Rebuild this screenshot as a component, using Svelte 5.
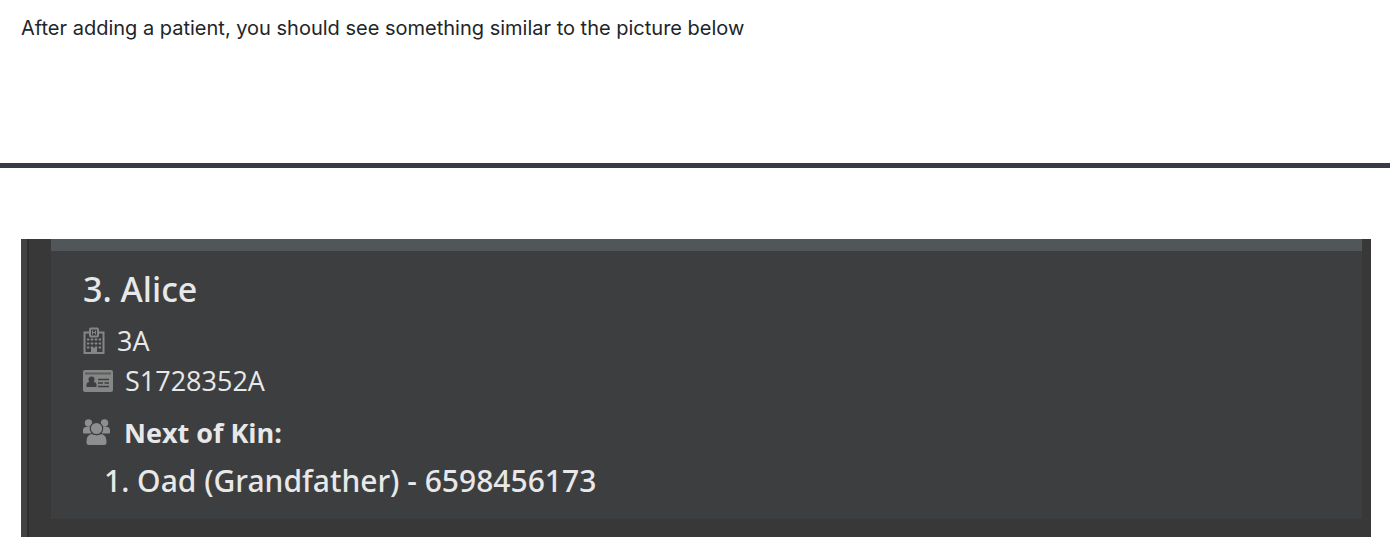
<script>
  const patient = {
    index: 3,
    name: 'Alice',
    ward: '3A',
    nric: 'S1728352A',
    kin: [{ name: 'Oad', relation: 'Grandfather', phone: '6598456173' }]
  };
</script>

<main>
  <p class="intro">After adding a patient, you should see something similar to the picture below</p>
  <hr />
  <section class="panel">
    <div class="previous"></div>
    <article class="card">
      <h2>{patient.index}. {patient.name}</h2>
      <div class="row ward">
        <svg width="22" height="28" viewBox="0 0 22 28" aria-hidden="true">
          <path d="M7 5.5H1.5V26H20.5V5.5H15" fill="none" stroke="#858686" stroke-width="2" />
          <rect x="7" y="1.5" width="8" height="8" rx="1" fill="#3c3e3f" stroke="#858686" stroke-width="2" />
          <path d="M9.5 3.5v4M12.5 3.5v4M9.5 5.5h3" stroke="#858686" stroke-width="1" />
          <path d="M4 12.5h14M4 16.5h14M4 20.5h14" stroke="#858686" stroke-width="2" stroke-dasharray="2 2" />
          <path d="M4 12.5h14M4 16.5h14M4 20.5h14" stroke="#858686" stroke-opacity=".4" stroke-width="1" />
          <rect x="8" y="21" width="6" height="6" fill="#858686" />
        </svg>
        <span>{patient.ward}</span>
      </div>
      <div class="row nric">
        <svg width="30" height="24" viewBox="0 0 30 24" aria-hidden="true">
          <rect x="0" y="1" width="30" height="22" rx="2" fill="#858686" />
          <path d="M2 4.5h26" stroke="#5c5e5f" stroke-width="2" />
          <circle cx="8.5" cy="10.5" r="3" fill="#3c3e3f" />
          <path d="M3.5 18v-2q0-3 3-3h4q3 0 3 3v2z" fill="#3c3e3f" />
          <path d="M15 10.5h11M15 14h5M21.5 14h4.5M15 17.5h11" stroke="#3c3e3f" stroke-width="1.5" />
        </svg>
        <span>{patient.nric}</span>
      </div>
      <div class="row kin">
        <svg width="28" height="28" viewBox="0 0 28 28" aria-hidden="true">
          <g fill="#8e8e8e">
            <circle cx="5.5" cy="4" r="3.7" />
            <circle cx="21.5" cy="4" r="3.7" />
            <path d="M0 14v-2.5q0-3.500 3-3.500h5v6.500H1zM27 14v-2.500q0-3.500-3-3.500h-5v6.500h7z" />
            <path d="M3.500 24v-2q0-6 5.500-7q5 2.500 9 0q5.500 1 5.500 7v2q0 2-2.500 2H6q-2.500 0-2.500-2z" />
            <circle cx="13.5" cy="9.5" r="6.2" stroke="#3c3e3f" stroke-width="1.2" />
          </g>
        </svg>
        <strong>Next of Kin:</strong>
      </div>
      <ul>
        {#each patient.kin as k, i}
          <li>{i + 1}. {k.name} ({k.relation}) - {k.phone}</li>
        {/each}
      </ul>
    </article>
  </section>
</main>

<style>
  :global(body) {
    margin: 0;
    background: #fff;
  }
  .intro {
    margin: 0;
    padding: 12px 21px 0;
    font: 400 20px/32px Inter, sans-serif;
    color: #212529;
  }
  hr {
    height: 5px;
    margin: 119px 0 71px;
    border: 0;
    background: #373b43;
  }
  .panel {
    margin: 0 19px 0 21px;
    padding: 0 9px 18px 30px;
    background: linear-gradient(to right, #424242 0 6px, #2d2d2d 6px 8px, #383838 8px);
    font-family: "Open Sans", sans-serif;
    color: #e8e8e8;
  }
  .previous {
    height: 12px;
    background: #515658;
  }
  .card {
    padding: 18px 32px;
    background: #3c3e3f;
  }
  h2 {
    margin: 0;
    font-family: "Noto Sans", "Open Sans", sans-serif;
    font-size: 34px;
    line-height: 40px;
    font-weight: 500;
  }
  .row {
    display: flex;
    align-items: center;
    font-size: 27px;
    line-height: 40px;
  }
  .row svg {
    flex: none;
  }
  .ward {
    gap: 12px;
    margin-top: 12px;
  }
  .nric {
    gap: 12px;
  }
  .kin {
    gap: 13px;
    margin-top: 12px;
  }
  strong {
    font-weight: 700;
  }
  ul {
    margin: 8px 0 0;
    padding: 0 0 0 21px;
    list-style: none;
    font-family: "Noto Sans", "Open Sans", sans-serif;
    font-size: 30px;
    line-height: 40px;
    font-weight: 500;
  }
</style>
